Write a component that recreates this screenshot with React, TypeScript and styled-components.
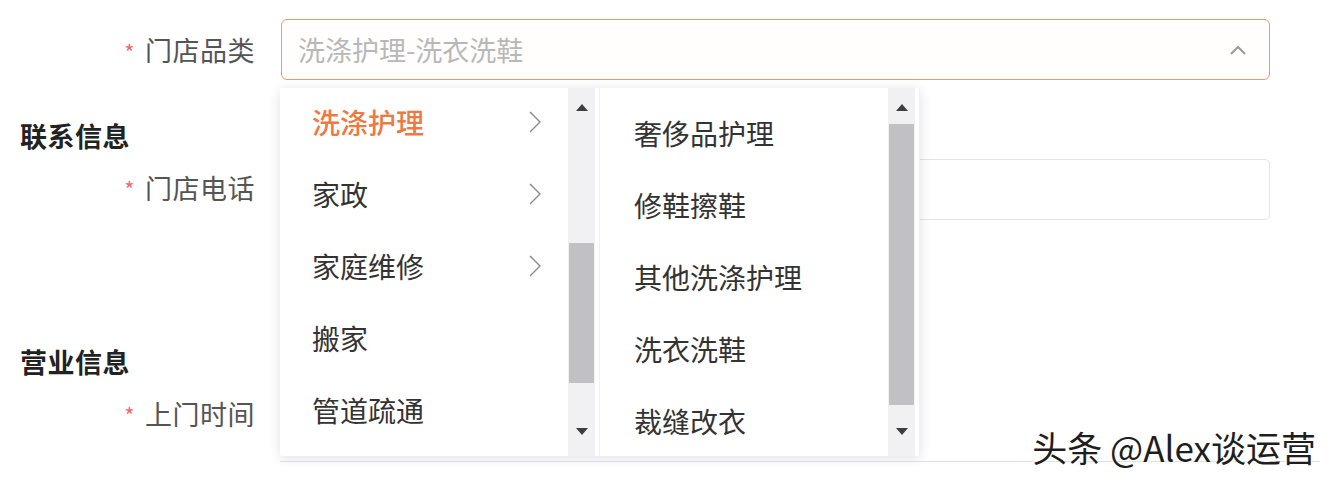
import React from 'react'
import styled, { createGlobalStyle } from 'styled-components'

const GlobalStyle = createGlobalStyle`
  body {
    margin: 0;
    background: #ffffff;
    font-family: "Noto Sans CJK SC", "Noto Sans", sans-serif;
  }
`

const primaryItems = [
  { id: 1, text: '洗涤护理', children: true, active: true },
  { id: 2, text: '家政', children: true },
  { id: 3, text: '家庭维修', children: true },
  { id: 4, text: '搬家' },
  { id: 5, text: '管道疏通' },
]

const secondaryItems = [
  { id: 1, text: '奢侈品护理' },
  { id: 2, text: '修鞋擦鞋' },
  { id: 3, text: '其他洗涤护理' },
  { id: 4, text: '洗衣洗鞋' },
  { id: 5, text: '裁缝改衣' },
]

const ChevronRight = () => (
  <svg width="14" height="24" viewBox="0 0 14 24">
    <path d="M2 2 L12 12 L2 22" fill="none" stroke="#8a8a8a" strokeWidth="1.4" />
  </svg>
)

const ChevronUp = () => (
  <svg width="18" height="10" viewBox="0 0 18 10">
    <path d="M2 9 L9 2 L16 9" fill="none" stroke="#9a9a9a" strokeWidth="2" />
  </svg>
)

const Arrow = ({ down }: { down?: boolean }) => (
  <svg width="12" height="7" viewBox="0 0 12 7">
    <path d={down ? 'M0 0 L12 0 L6 7 Z' : 'M0 7 L12 7 L6 0 Z'} fill="#3e3e3e" />
  </svg>
)

const Scrollbar = ({ thumbTop, thumbHeight }: { thumbTop: number; thumbHeight: number }) => (
  <ScrollTrack>
    <ScrollButton>
      <Arrow />
    </ScrollButton>
    <ScrollArea>
      <Thumb style={{ marginTop: thumbTop, height: thumbHeight }} />
    </ScrollArea>
    <ScrollButton>
      <Arrow down />
    </ScrollButton>
  </ScrollTrack>
)

export default function App() {
  return (
    <Page>
      <GlobalStyle />
      <Form>
        <FieldRow>
          <Label required>门店品类</Label>
          <SelectBox>
            <Placeholder>洗涤护理-洗衣洗鞋</Placeholder>
            <ChevronUp />
          </SelectBox>
        </FieldRow>

        <SectionTitle>联系信息</SectionTitle>
        <FieldRow>
          <Label required>门店电话</Label>
          <InputBox />
        </FieldRow>

        <SectionTitle $gap={124}>营业信息</SectionTitle>
        <FieldRow>
          <Label required>上门时间</Label>
          <EmptyControl />
        </FieldRow>
        <Divider />
      </Form>

      <Dropdown>
        <MenuColumn>
          <MenuList $offset={-2}>
            {primaryItems.map((item) => (
              <MenuItem key={item.id} $active={item.active}>
                <span>{item.text}</span>
                {item.children && <ChevronRight />}
              </MenuItem>
            ))}
          </MenuList>
          <Scrollbar thumbTop={125} thumbHeight={140} />
        </MenuColumn>
        <MenuColumn>
          <MenuList $offset={9} $wide>
            {secondaryItems.map((item) => (
              <MenuItem key={item.id}>
                <span>{item.text}</span>
              </MenuItem>
            ))}
          </MenuList>
          <Scrollbar thumbTop={6} thumbHeight={281} />
        </MenuColumn>
      </Dropdown>

      <Watermark>头条 @Alex谈运营</Watermark>
    </Page>
  )
}

const Page = styled.div`
  position: relative;
  width: 1332px;
  height: 480px;
  overflow: hidden;
  background: #ffffff;
`

const Form = styled.div`
  display: flex;
  flex-direction: column;
  padding: 19px 0 0 20px;
`

const FieldRow = styled.div`
  display: grid;
  grid-template-columns: 235px 989px;
  column-gap: 26px;
  align-items: center;
`

const Label = styled.label<{ required?: boolean }>`
  display: flex;
  justify-content: flex-end;
  align-items: center;
  font-size: 27px;
  color: #555555;
  letter-spacing: 0.5px;

  &::before {
    content: ${(p) => (p.required ? '"*"' : '""')};
    color: #f06a72;
    font-size: 22px;
    margin-right: 10px;
    margin-top: 2px;
  }
`

const SelectBox = styled.div`
  display: flex;
  align-items: center;
  justify-content: space-between;
  height: 61px;
  box-sizing: border-box;
  padding: 0 22px 0 16px;
  border: 1.5px solid #e99a6e;
  border-radius: 6px;
  background: #fffefd;
`

const Placeholder = styled.span`
  font-size: 27px;
  color: #b8b8b8;
`

const InputBox = styled.div`
  height: 61px;
  box-sizing: border-box;
  margin-top: 5px;
  border: 1px solid #e4e4e4;
  border-radius: 5px;
`

const EmptyControl = styled.div`
  height: 61px;
  margin-top: 5px;
`

const SectionTitle = styled.h3<{ $gap?: number }>`
  margin: ${(p) => p.$gap ?? 38}px 0 0;
  height: 36px;
  line-height: 36px;
  font-size: 27px;
  font-weight: 700;
  color: #222222;
  letter-spacing: 0.5px;
`

const Divider = styled.div`
  margin: 15px 0 0 260px;
  width: 1040px;
  height: 1px;
  background: #e2e2e6;
`

const Dropdown = styled.div`
  position: absolute;
  top: 88px;
  left: 280px;
  width: 640px;
  height: 368px;
  display: flex;
  background: #ffffff;
  box-shadow: 0 2px 12px rgba(40, 40, 80, 0.14);
  border-radius: 3px;
  overflow: hidden;
`

const MenuColumn = styled.div`
  display: flex;
  width: 320px;
  padding-right: 4px;
  box-sizing: border-box;
  border-right: 1px solid #f0f0f4;
`

const MenuList = styled.ul<{ $offset: number; $wide?: boolean }>`
  flex: 1;
  list-style: none;
  margin: ${(p) => p.$offset}px 0 0;
  padding: 0 ${(p) => (p.$wide ? 0 : 26)}px 0 ${(p) => (p.$wide ? 34 : 32)}px;
`

const MenuItem = styled.li<{ $active?: boolean }>`
  display: flex;
  align-items: center;
  justify-content: space-between;
  height: 72px;
  font-size: 28px;
  color: ${(p) => (p.$active ? '#ec7a44' : '#333333')};
  font-weight: ${(p) => (p.$active ? 500 : 400)};
`

const ScrollTrack = styled.div`
  display: flex;
  flex-direction: column;
  width: 27px;
  padding: 8px 0 14px;
  background: #f1f1f3;
`

const ScrollButton = styled.div`
  display: flex;
  align-items: center;
  justify-content: center;
  height: 22px;
`

const ScrollArea = styled.div`
  flex: 1;
  display: flex;
  flex-direction: column;
  align-items: center;
`

const Thumb = styled.div`
  width: 25px;
  background: #c1c1c5;
`

const Watermark = styled.div`
  position: absolute;
  right: 16px;
  bottom: 8px;
  font-size: 35px;
  color: #1e1e1e;
  text-shadow: 1px 1px 0 #ffffff, -1px -1px 0 #ffffff;
`
